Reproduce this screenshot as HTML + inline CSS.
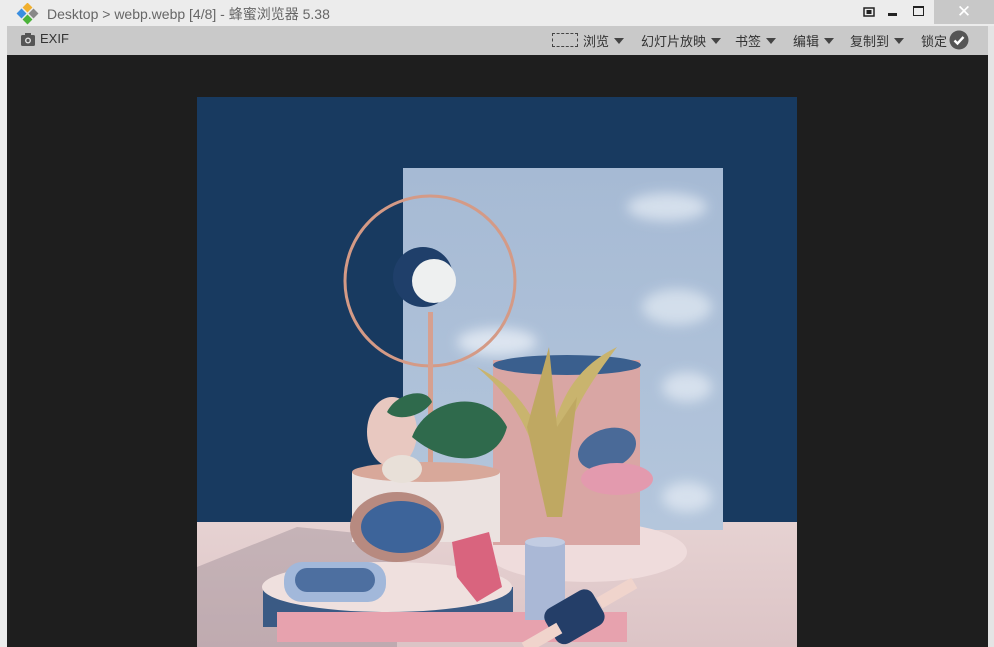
<!DOCTYPE html>
<html><head><meta charset="utf-8"><style>
*{margin:0;padding:0;box-sizing:border-box}
body{width:994px;height:647px;overflow:hidden;background:#ececec;font-family:"Liberation Sans","Noto Sans CJK SC",sans-serif;position:relative}
.title{position:absolute;left:0;top:0;width:994px;height:26px;background:#ececec}
.title .t{position:absolute;left:47px;top:4px;font-size:14px;color:#666}
.tb{position:absolute;left:7px;top:26px;width:981px;height:29px;background:#c9c9c9;font-size:13px;color:#333}
.tb span{position:absolute;top:5px}
.main{position:absolute;left:7px;top:55px;width:981px;height:592px;background:#1e1e1e}
.rb{position:absolute;left:988px;top:26px;width:6px;height:621px;background:#e4e4e4}
.close{position:absolute;left:934px;top:0;width:60px;height:24px;background:#c8c8c8;color:#fff;font-size:17px;text-align:center;line-height:24px}
.tri{display:inline-block;width:0;height:0;border-left:5px solid transparent;border-right:5px solid transparent;border-top:6px solid #444;margin-left:5px;vertical-align:2px}
</style></head><body>
<div class="title">
<svg style="position:absolute;left:15px;top:3px" width="28" height="22" viewBox="0 0 28 22"><rect x="9" y="1" width="7" height="7" transform="rotate(45 12.5 4.5)" fill="#f0b030"/><rect x="3" y="7" width="7" height="7" transform="rotate(45 6.5 10.5)" fill="#3a8ee0"/><rect x="15" y="7" width="7" height="7" transform="rotate(45 18.5 10.5)" fill="#888"/><rect x="9" y="13" width="7" height="7" transform="rotate(45 12.5 16.5)" fill="#4bb33a"/></svg>
<div class="t">Desktop &gt; webp.webp [4/8] - 蜂蜜浏览器 5.38</div>
<svg style="position:absolute;left:863px;top:7px" width="12" height="10"><rect x="1" y="1" width="10" height="8" fill="none" stroke="#222" stroke-width="1.5"/><rect x="3.5" y="3" width="5" height="4" fill="#222"/></svg>
<div style="position:absolute;left:888px;top:13px;width:9px;height:3px;background:#222"></div>
<div style="position:absolute;left:913px;top:6px;width:11px;height:10px;border:1.5px solid #222;border-top-width:2.5px"></div>
<div class="close">✕</div>
</div>
<div class="tb">
<svg style="position:absolute;left:14px;top:7px" width="14" height="13"><rect x="0" y="2" width="14" height="11" rx="1.5" fill="#555"/><rect x="4" y="0" width="6" height="3" fill="#555"/><circle cx="7" cy="7.5" r="3" fill="#ddd"/><circle cx="7" cy="7.5" r="1.6" fill="#555"/></svg>
<span style="left:33px">EXIF</span>
<div style="position:absolute;left:545px;top:7px;width:26px;height:14px;border:1px dashed #444"></div>
<span style="left:576px">浏览<i class="tri"></i></span>
<span style="left:634px">幻灯片放映<i class="tri"></i></span>
<span style="left:728px">书签<i class="tri"></i></span>
<span style="left:786px">编辑<i class="tri"></i></span>
<span style="left:843px">复制到<i class="tri"></i></span>
<span style="left:914px">锁定</span>
<svg style="position:absolute;left:942px;top:4px" width="20" height="20"><circle cx="10" cy="10" r="9.5" fill="#555"/><path d="M5.5 10.5l3 3 6-6.5" stroke="#fff" stroke-width="2.4" fill="none"/></svg>
</div>
<div class="main"></div>
<div class="rb"></div>
<svg style="position:absolute;left:197px;top:97px" width="600" height="550" viewBox="0 0 600 550">
<defs><linearGradient id="fl" x1="0" y1="0" x2="0" y2="1"><stop offset="0" stop-color="#e6d2d2"/><stop offset="1" stop-color="#dcc4c6"/></linearGradient>
<linearGradient id="sk" x1="0" y1="0" x2="0" y2="1"><stop offset="0" stop-color="#a6bad4"/><stop offset="1" stop-color="#b4c6dc"/></linearGradient>
<filter id="b"><feGaussianBlur stdDeviation="6"/></filter></defs>
<rect width="600" height="550" fill="#183a60"/>
<rect y="425" width="600" height="125" fill="url(#fl)"/>
<rect x="206" y="71" width="320" height="362" fill="url(#sk)"/>
<g filter="url(#b)" opacity=".8">
<ellipse cx="300" cy="245" rx="40" ry="14" fill="#e8eef6"/>
<ellipse cx="470" cy="110" rx="40" ry="14" fill="#e0e8f2"/>
<ellipse cx="480" cy="210" rx="35" ry="18" fill="#dde6f0"/>
<ellipse cx="490" cy="290" rx="25" ry="15" fill="#e0e8f2"/>
<ellipse cx="490" cy="400" rx="25" ry="15" fill="#e0e8f2"/>
</g>
<path d="M0 470 L100 430 L200 440 L200 550 L0 550Z" fill="#8a7a88" opacity=".35"/>
<ellipse cx="390" cy="455" rx="100" ry="30" fill="#efdcdc"/>
<rect x="296" y="263" width="147" height="185" fill="#d9a6a4"/>
<ellipse cx="370" cy="268" rx="74" ry="10" fill="#3a5f8e"/>
<rect x="66" y="490" width="250" height="40" fill="#3a5a84"/>
<ellipse cx="190" cy="490" rx="125" ry="25" fill="#efe0de"/>
<rect x="80" y="515" width="350" height="30" fill="#e7a2ae"/>
<circle cx="233" cy="184" r="85" fill="none" stroke="#d49a86" stroke-width="3"/>
<rect x="231" y="215" width="5" height="160" fill="#d6a090"/>
<circle cx="226" cy="180" r="30" fill="#1f3f6a"/>
<circle cx="237" cy="184" r="22" fill="#eef0f0"/>
<rect x="155" y="375" width="148" height="70" fill="#ebe2e0"/>
<ellipse cx="229" cy="375" rx="74" ry="10" fill="#d8a89a"/>
<ellipse cx="195" cy="335" rx="25" ry="35" fill="#e8c8c0"/>
<path d="M215 340 C230 300 290 290 310 330 C300 370 250 370 215 340Z" fill="#2f6a4c"/>
<path d="M190 315 C200 295 230 290 235 305 C225 320 200 325 190 315Z" fill="#2f6a4c"/>
<ellipse cx="205" cy="372" rx="20" ry="14" fill="#e8e0d8"/>
<ellipse cx="200" cy="430" rx="47" ry="35" fill="#b78a80"/>
<ellipse cx="204" cy="430" rx="40" ry="26" fill="#3d649a"/>
<path d="M340 360 C320 300 290 280 280 270 C320 290 340 320 350 360 C360 300 380 270 420 250 C390 290 370 320 360 370Z" fill="#c9b46e"/>
<path d="M350 420 L330 330 L352 250 L360 330 L380 300 L365 420Z" fill="#bfa862"/>
<ellipse cx="410" cy="352" rx="30" ry="20" fill="#4a6a98" transform="rotate(-20 410 352)"/>
<ellipse cx="420" cy="382" rx="36" ry="16" fill="#e39aae"/>
<rect x="328" y="445" width="40" height="78" fill="#aab8d6"/>
<ellipse cx="348" cy="445" rx="20" ry="5" fill="#c2cce2"/>
<path d="M255 445 L292 435 L305 490 L280 505 L260 480Z" fill="#d9647e"/>
<rect x="87" y="465" width="102" height="40" rx="18" fill="#a2b8da"/>
<rect x="98" y="471" width="80" height="24" rx="12" fill="#4d6fa0"/>
<rect x="350" y="500" width="55" height="40" rx="10" fill="#243e68" transform="rotate(-30 377 520)"/>
<rect x="400" y="490" width="40" height="12" fill="#f0d4cc" transform="rotate(-30 420 496)"/>
<rect x="325" y="535" width="40" height="12" fill="#f0d4cc" transform="rotate(-30 345 541)"/>
</svg>
</body></html>
